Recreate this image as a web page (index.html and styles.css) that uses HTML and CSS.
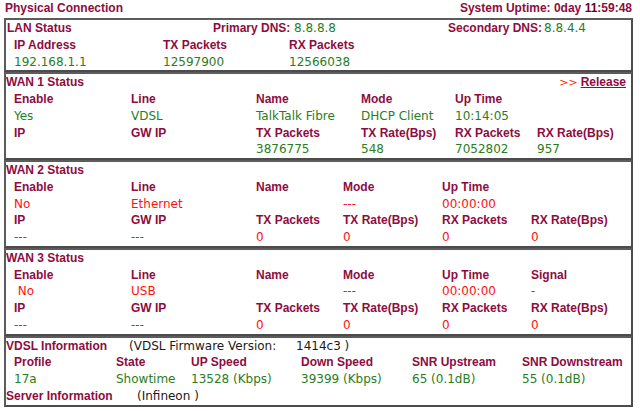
FILE: index.html
```html
<!DOCTYPE html>
<html>
<head>
<meta charset="utf-8">
<title>Physical Connection</title>
<link rel="stylesheet" href="styles.css">
</head>
<body>
<div class="page">
  <div class="top">
    <span class="lbl">Physical Connection</span>
    <span class="lbl uptime">System Uptime: 0day <b>11</b>:59:48</span>
  </div>

  <section class="box">
    <div class="row lan-head">
      <span class="lbl">LAN Status</span>
      <span class="lbl">Primary DNS:</span>
      <span class="val">8.8.8.8</span>
      <span class="lbl">Secondary DNS:</span>
      <span class="val">8.8.4.4</span>
    </div>
    <div class="grid g-lan">
      <span class="lbl">IP Address</span><span class="lbl">TX Packets</span><span class="lbl">RX Packets</span>
      <span class="val">192.168.1.1</span><span class="val">12597900</span><span class="val">12566038</span>
    </div>
  </section>

  <section class="box">
    <div class="row head">
      <span class="lbl">WAN 1 Status</span>
      <span class="action"><span class="arrows">&gt;&gt;</span> <a class="lbl link" href="#">Release</a></span>
    </div>
    <div class="grid g-wan1">
      <span class="lbl">Enable</span><span class="lbl">Line</span><span class="lbl">Name</span><span class="lbl">Mode</span><span class="lbl">Up Time</span><span></span>
      <span class="val">Yes</span><span class="val">VDSL</span><span class="val">TalkTalk Fibre</span><span class="val">DHCP Client</span><span class="val">10:14:05</span><span></span>
      <span class="lbl">IP</span><span class="lbl">GW IP</span><span class="lbl">TX Packets</span><span class="lbl">TX Rate(Bps)</span><span class="lbl">RX Packets</span><span class="lbl">RX Rate(Bps)</span>
      <span></span><span></span><span class="val">3876775</span><span class="val">548</span><span class="val">7052802</span><span class="val">957</span>
    </div>
  </section>

  <section class="box">
    <div class="row head">
      <span class="lbl">WAN 2 Status</span>
    </div>
    <div class="grid g-wan">
      <span class="lbl">Enable</span><span class="lbl">Line</span><span class="lbl">Name</span><span class="lbl">Mode</span><span class="lbl">Up Time</span><span></span>
      <span class="val red">No</span><span class="val red">Ethernet</span><span></span><span class="val red">---</span><span class="val red">00:00:00</span><span></span>
      <span class="lbl">IP</span><span class="lbl">GW IP</span><span class="lbl">TX Packets</span><span class="lbl">TX Rate(Bps)</span><span class="lbl">RX Packets</span><span class="lbl">RX Rate(Bps)</span>
      <span class="val red">---</span><span class="val red">---</span><span class="val red">0</span><span class="val red">0</span><span class="val red">0</span><span class="val red">0</span>
    </div>
  </section>

  <section class="box">
    <div class="row head">
      <span class="lbl">WAN 3 Status</span>
    </div>
    <div class="grid g-wan">
      <span class="lbl">Enable</span><span class="lbl">Line</span><span class="lbl">Name</span><span class="lbl">Mode</span><span class="lbl">Up Time</span><span class="lbl">Signal</span>
      <span class="val red">&nbsp;No</span><span class="val red">USB</span><span></span><span class="val red">---</span><span class="val red">00:00:00</span><span class="val red">-</span>
      <span class="lbl">IP</span><span class="lbl">GW IP</span><span class="lbl">TX Packets</span><span class="lbl">TX Rate(Bps)</span><span class="lbl">RX Packets</span><span class="lbl">RX Rate(Bps)</span>
      <span class="val red">---</span><span class="val red">---</span><span class="val red">0</span><span class="val red">0</span><span class="val red">0</span><span class="val red">0</span>
    </div>
  </section>

  <section class="box">
    <div class="row vdsl-head">
      <span class="lbl">VDSL Information</span>
      <span class="val dark">(VDSL Firmware Version:</span>
      <span class="val dark">1414c3 )</span>
    </div>
    <div class="grid g-vdsl">
      <span class="lbl">Profile</span><span class="lbl">State</span><span class="lbl">UP Speed</span><span class="lbl">Down Speed</span><span class="lbl">SNR Upstream</span><span class="lbl">SNR Downstream</span>
      <span class="val">17a</span><span class="val">Showtime</span><span class="val">13528 (Kbps)</span><span class="val">39399 (Kbps)</span><span class="val">65 (0.1dB)</span><span class="val">55 (0.1dB)</span>
    </div>
    <div class="row server-head">
      <span class="lbl">Server Information</span>
      <span class="val dark">(Infineon )</span>
    </div>
  </section>
</div>
</body>
</html>
```

FILE: styles.css
```css
html, body {
  margin: 0;
  padding: 0;
  background: #ffffff;
}

.page {
  width: 640px;
  line-height: 16.75px;
  font-size: 12px;
}

.lbl {
  font-family: "Liberation Sans", Arial, sans-serif;
  font-weight: bold;
  font-size: 12px;
  color: #8e0c3e;
  white-space: nowrap;
}

.val {
  font-family: "DejaVu Sans", Verdana, sans-serif;
  font-size: 12px;
  color: #2a7d22;
  white-space: nowrap;
}

.val.red {
  color: #ff1010;
}

.val.dark {
  color: #1a1a1a;
}

.top {
  display: flex;
  justify-content: space-between;
  height: 18px;
  padding: 0 8px 0 5px;
  line-height: 17px;
}

.uptime b {
  color: #6a0020;
  font-weight: 900;
}

.box {
  margin-left: 4px;
  width: 629px;
  box-sizing: border-box;
  border: 2px solid #4c4c4c;
  border-top-color: #5c5c5c;
  border-left-color: #5c5c5c;
}

.row {
  height: 16.75px;
  display: grid;
  align-items: center;
}

.head {
  display: flex;
  justify-content: space-between;
  padding: 0 5px 0 0;
}

.action {
  white-space: nowrap;
}

.arrows {
  font-family: "DejaVu Sans", Verdana, sans-serif;
  font-size: 11px;
  color: #ff2a00;
}

.link {
  text-decoration: underline;
}

.lan-head {
  grid-template-columns: 206px 81px 154px 96px 1fr;
  padding-left: 1px;
}

.vdsl-head {
  grid-template-columns: 123px 167px 1fr;
}

.server-head {
  grid-template-columns: 131px 1fr;
}

.grid {
  display: grid;
  grid-auto-rows: 16.75px;
  align-items: center;
  padding-left: 8px;
}

.g-lan {
  grid-template-columns: 149px 126px 1fr;
}

.g-wan1 {
  grid-template-columns: 117px 125px 105px 94px 82px 1fr;
}

.g-wan {
  grid-template-columns: 117px 125px 87px 99px 89px 1fr;
}

.g-vdsl {
  grid-template-columns: 102px 75px 110px 111px 110px 1fr;
}
```
